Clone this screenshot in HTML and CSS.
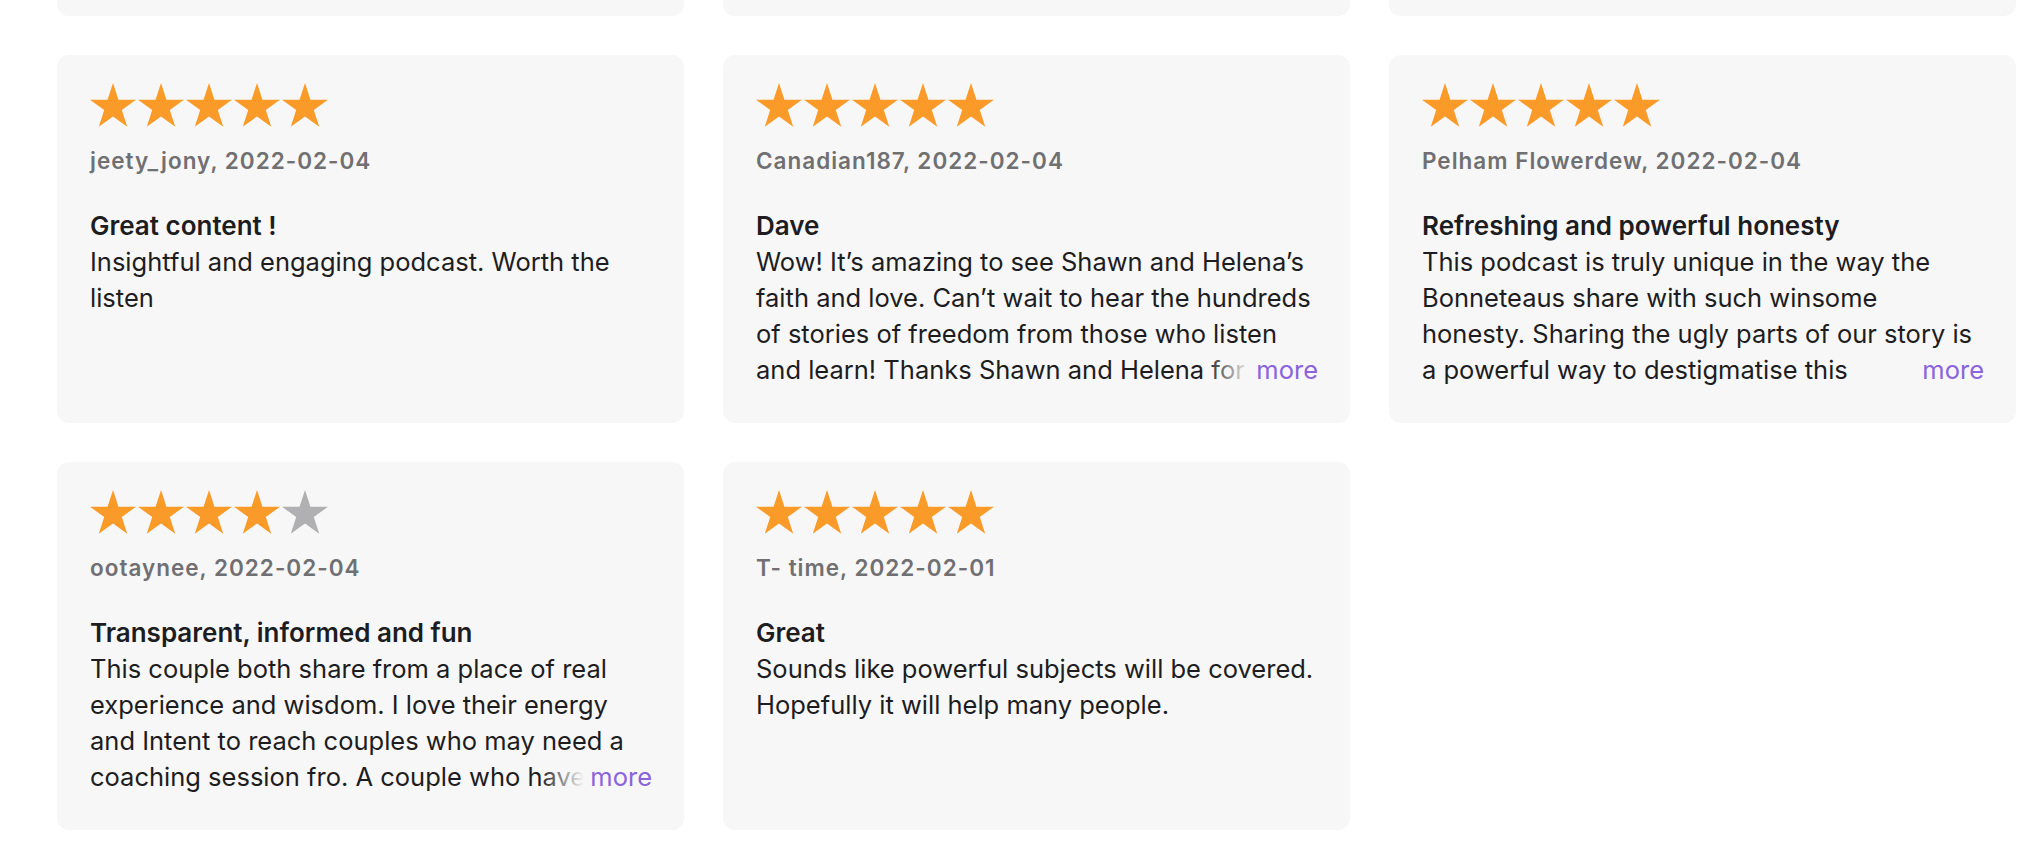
FILE: index.html
```html
<!DOCTYPE html>
<html lang="en">
<head>
<meta charset="utf-8">
<title>Reviews</title>
<link rel="stylesheet" href="styles.css">
</head>
<body>
<svg class="defs" width="0" height="0" aria-hidden="true">
  <defs>
    <symbol id="star" viewBox="0 0 46 44">
      <polygon points="23,0 28.43,16.72 46,16.72 31.79,27.06 37.22,43.78 23,33.44 8.78,43.78 14.21,27.06 0,16.72 17.57,16.72"/>
    </symbol>
  </defs>
</svg>
<main class="reviews">
  <div class="stub"></div>
  <div class="stub"></div>
  <div class="stub"></div>

  <article class="card">
    <div class="stars">
      <svg class="star on"><use href="#star"/></svg><svg class="star on"><use href="#star"/></svg><svg class="star on"><use href="#star"/></svg><svg class="star on"><use href="#star"/></svg><svg class="star on"><use href="#star"/></svg>
    </div>
    <div class="author">jeety_jony, 2022-02-04</div>
    <h3 class="title">Great content !</h3>
    <div class="body"><p>Insightful and engaging podcast. Worth the listen</p></div>
  </article>

  <article class="card">
    <div class="stars">
      <svg class="star on"><use href="#star"/></svg><svg class="star on"><use href="#star"/></svg><svg class="star on"><use href="#star"/></svg><svg class="star on"><use href="#star"/></svg><svg class="star on"><use href="#star"/></svg>
    </div>
    <div class="author">Canadian187, 2022-02-04</div>
    <h3 class="title">Dave</h3>
    <div class="body clamped"><p>Wow! It’s amazing to see Shawn and Helena’s faith and love. Can’t wait to hear the hundreds of stories of freedom from those who listen and learn! Thanks Shawn and Helena for sharing your story so openly with all of us.</p><button class="more">more</button></div>
  </article>

  <article class="card">
    <div class="stars">
      <svg class="star on"><use href="#star"/></svg><svg class="star on"><use href="#star"/></svg><svg class="star on"><use href="#star"/></svg><svg class="star on"><use href="#star"/></svg><svg class="star on"><use href="#star"/></svg>
    </div>
    <div class="author">Pelham Flowerdew, 2022-02-04</div>
    <h3 class="title">Refreshing and powerful honesty</h3>
    <div class="body clamped"><p>This podcast is truly unique in the way the Bonneteaus share with such winsome honesty. Sharing the ugly parts of our story is a powerful way to destigmatise this conversation and bring hope to others.</p><button class="more">more</button></div>
  </article>

  <article class="card">
    <div class="stars">
      <svg class="star on"><use href="#star"/></svg><svg class="star on"><use href="#star"/></svg><svg class="star on"><use href="#star"/></svg><svg class="star on"><use href="#star"/></svg><svg class="star off"><use href="#star"/></svg>
    </div>
    <div class="author">ootaynee, 2022-02-04</div>
    <h3 class="title">Transparent, informed and fun</h3>
    <div class="body clamped"><p>This couple both share from a place of real experience and wisdom. I love their energy and Intent to reach couples who may need a coaching session fro. A couple who have been there and come through it together.</p><button class="more">more</button></div>
  </article>

  <article class="card">
    <div class="stars">
      <svg class="star on"><use href="#star"/></svg><svg class="star on"><use href="#star"/></svg><svg class="star on"><use href="#star"/></svg><svg class="star on"><use href="#star"/></svg><svg class="star on"><use href="#star"/></svg>
    </div>
    <div class="author">T- time, 2022-02-01</div>
    <h3 class="title">Great</h3>
    <div class="body"><p>Sounds like powerful subjects will be covered. Hopefully it will help many people.</p></div>
  </article>
</main>
</body>
</html>
```

FILE: styles.css
```css
* { box-sizing: border-box; }

html, body {
  margin: 0;
  padding: 0;
  background: #ffffff;
}

body {
  font-family: Inter, "Noto Sans", "Liberation Sans", sans-serif;
  color: #1d1d1f;
  -webkit-font-smoothing: antialiased;
}

.defs {
  position: absolute;
  width: 0;
  height: 0;
  overflow: hidden;
}

.reviews {
  display: grid;
  grid-template-columns: repeat(3, 627px);
  column-gap: 39px;
  row-gap: 39px;
  padding-left: 57px;
}

.stub {
  height: 16px;
  background: #f7f7f7;
  border-radius: 0 0 12px 12px;
}

.card {
  background: #f7f7f7;
  border-radius: 12px;
  padding: 27px 32px 35px 33px;
  display: flex;
  flex-direction: column;
}

.stars {
  display: flex;
  gap: 2px;
  height: 46px;
  align-items: flex-start;
}

.star {
  width: 46px;
  height: 46px;
  flex: none;
}

.star.on { fill: #fa9a28; }
.star.off { fill: #b0b0b2; }

.author {
  margin-top: 18px;
  font-size: 22.5px;
  line-height: 30px;
  font-weight: 600;
  letter-spacing: 1px;
  color: #707072;
}

.title {
  margin: 32px 0 0;
  font-size: 26px;
  line-height: 36px;
  font-weight: 600;
  color: #1d1d1f;
}

.body {
  position: relative;
  font-size: 25.5px;
  line-height: 36px;
  color: #1d1d1f;
}

.body p {
  margin: 0;
}

.body.clamped {
  max-height: 144px;
  overflow: hidden;
}

.more {
  position: absolute;
  right: 0;
  bottom: 0;
  height: 36px;
  padding: 0 0 0 50px;
  border: 0;
  font: inherit;
  line-height: 36px;
  color: #8a63dd;
  background: linear-gradient(to right, rgba(247, 247, 247, 0) 0, #f7f7f7 44px);
  cursor: pointer;
}
```
